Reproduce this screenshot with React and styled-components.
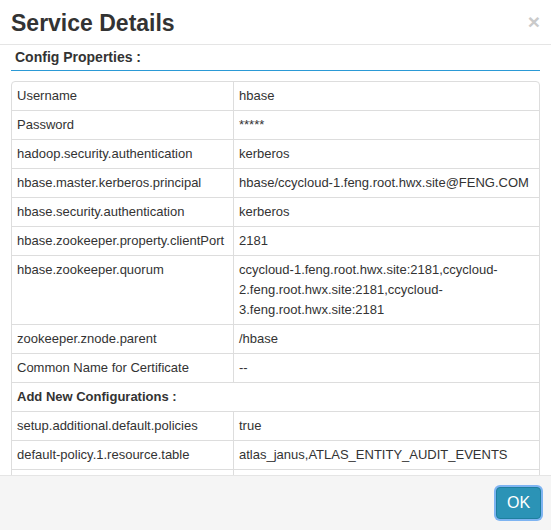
import React from "react";
import styled, { createGlobalStyle } from "styled-components";

const GlobalStyle = createGlobalStyle`
  html, body {
    margin: 0;
    padding: 0;
    background: #fff;
  }
  body {
    font-family: "Liberation Sans", Arial, Helvetica, sans-serif;
    color: #333;
  }
`;

const config = [
  ["Username", "hbase"],
  ["Password", "*****"],
  ["hadoop.security.authentication", "kerberos"],
  ["hbase.master.kerberos.principal", "hbase/ccycloud-1.feng.root.hwx.site@FENG.COM"],
  ["hbase.security.authentication", "kerberos"],
  ["hbase.zookeeper.property.clientPort", "2181"],
  [
    "hbase.zookeeper.quorum",
    "ccycloud-1.feng.root.hwx.site:2181,ccycloud-2.feng.root.hwx.site:2181,ccycloud-3.feng.root.hwx.site:2181"
  ],
  ["zookeeper.znode.parent", "/hbase"],
  ["Common Name for Certificate", "--"]
];

const extra = [
  ["setup.additional.default.policies", "true"],
  ["default-policy.1.resource.table", "atlas_janus,ATLAS_ENTITY_AUDIT_EVENTS"],
  ["default-policy.1.resource.column-family", "*"]
];

const App = () => {
  return (
    <Modal>
      <GlobalStyle />
      <Header>
        <Title>Service Details</Title>
        <Close>×</Close>
      </Header>
      <Body>
        <SectionTitle>Config Properties :</SectionTitle>
        <Table>
          <colgroup>
            <col style={{ width: "221px" }} />
            <col />
          </colgroup>
          <tbody>
            {config.map(([k, v]) => (
              <tr key={k}>
                <Cell>{k}</Cell>
                <Cell>{v}</Cell>
              </tr>
            ))}
            <tr>
              <Cell colSpan={2} bold>
                Add New Configurations :
              </Cell>
            </tr>
            {extra.map(([k, v]) => (
              <tr key={k}>
                <Cell>{k}</Cell>
                <Cell>{v}</Cell>
              </tr>
            ))}
          </tbody>
        </Table>
      </Body>
      <Footer>
        <OkButton>OK</OkButton>
      </Footer>
    </Modal>
  );
};

export default App;

const Modal = styled.div`
  display: flex;
  flex-direction: column;
  height: 530px;
  width: 551px;
  background: #fff;
  overflow: hidden;
`;

const Header = styled.div`
  display: flex;
  align-items: center;
  justify-content: space-between;
  height: 44px;
  padding: 0 11px;
  border-bottom: 1px solid #e5e5e5;
  flex-shrink: 0;
`;

const Title = styled.h3`
  margin: 0;
  font-size: 23px;
  font-weight: bold;
  line-height: 28px;
  color: #333;
  padding-top: 1px;
`;

const Close = styled.span`
  font-size: 21px;
  font-weight: bold;
  color: #cacaca;
  line-height: 1;
  margin-right: 0;
  margin-top: -2px;
`;

const Body = styled.div`
  flex: 1;
  overflow: hidden;
  padding: 2px 11px 0;
`;

const SectionTitle = styled.div`
  font-size: 14px;
  font-weight: bold;
  line-height: 20px;
  padding: 0 4px 3px;
  border-bottom: 1px solid #2b9ad6;
  margin-bottom: 10px;
`;

const Table = styled.table`
  width: 100%;
  table-layout: fixed;
  border-collapse: separate;
  border-spacing: 0;
  border: 1px solid #ddd;
  border-radius: 4px;
  font-size: 13px;
  line-height: 20px;
  color: #333;

  tr:first-child td {
    border-top: none;
  }
`;

const Cell = styled.td`
  padding: 4px 5px;
  border-top: 1px solid #ddd;
  vertical-align: top;
  font-weight: ${p => (p.bold ? "bold" : "normal")};
  word-wrap: break-word;

  & + & {
    border-left: 1px solid #ddd;
  }
`;

const Footer = styled.div`
  display: flex;
  justify-content: flex-end;
  align-items: center;
  height: 54px;
  padding: 0 10px;
  background: #f5f5f5;
  border-top: 1px solid #e5e5e5;
  flex-shrink: 0;
`;

const OkButton = styled.button`
  font-family: "Liberation Sans", Arial, sans-serif;
  font-size: 16px;
  color: #fff;
  background: #2b93b6;
  border: 1px solid #1f7f9e;
  border-radius: 4px;
  width: 45px;
  height: 32px;
  padding: 0;
  box-shadow: 0 0 0 2px #7eb4f2;
  cursor: pointer;
`;
